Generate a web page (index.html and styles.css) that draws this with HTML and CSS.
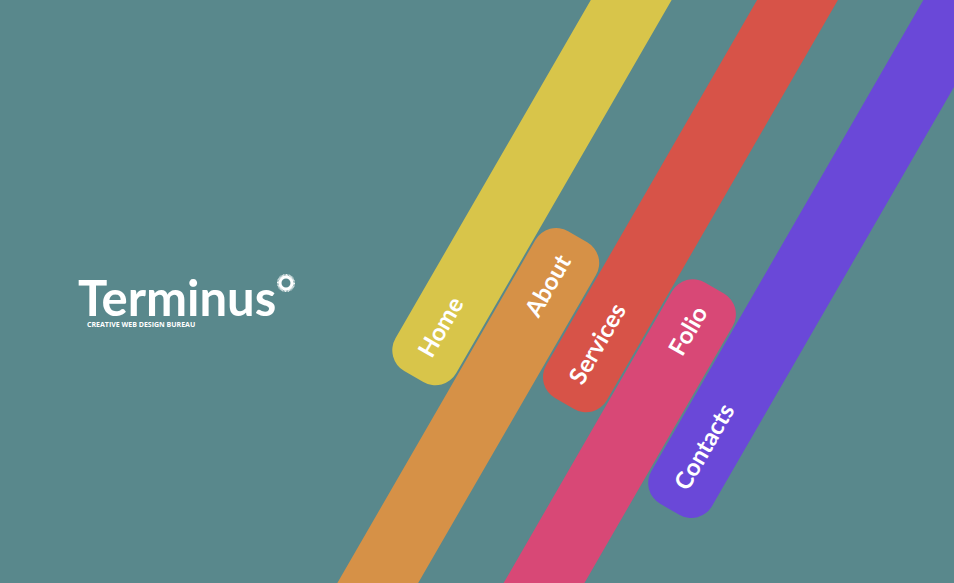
FILE: index.html
```html
<!DOCTYPE html>
<html lang="en">
<head>
  <meta charset="utf-8">
  <title>Terminus</title>
  <link rel="stylesheet" href="styles.css">
</head>
<body>
  <header class="brand">
    <h1 class="brand-name">Terminus
      <svg class="brand-mark" viewBox="0 0 20 20" aria-hidden="true">
        <circle class="mark-teeth" cx="10" cy="10" r="8" pathLength="72"/>
        <circle class="mark-ring" cx="10" cy="10" r="6"/>
      </svg>
    </h1>
    <p class="tagline">CREATIVE WEB DESIGN BUREAU</p>
  </header>
  <nav class="bands">
    <a class="band rising home" href="#home">Home</a>
    <a class="band falling about" href="#about">About</a>
    <a class="band rising services" href="#services">Services</a>
    <a class="band falling folio" href="#folio">Folio</a>
    <a class="band rising contacts" href="#contacts">Contacts</a>
  </nav>
</body>
</html>
```
FILE: styles.css
```css
* {
  box-sizing: border-box;
}

body {
  display: flex;
  flex-direction: column;
  justify-content: center;
  position: relative;
  min-height: 100vh;
  margin: 0;
  padding-left: 78px;
  overflow: hidden;
  background: #59888c;
  color: #fff;
  font-family: "Trebuchet MS", Lato, "Open Sans", sans-serif;
}

.brand {
  align-self: flex-start;
  padding-top: 19px;
}

.brand-name {
  display: flex;
  margin: 0;
  font-size: 49px;
  font-weight: 700;
  line-height: 48px;
}

.brand-mark {
  width: 20px;
  height: 20px;
}

.brand-mark circle {
  fill: none;
  stroke: #fff;
}

.brand-mark .mark-teeth {
  stroke-width: 2;
  stroke-dasharray: 1.2 0.8;
}

.brand-mark .mark-ring {
  stroke-width: 3;
}

.tagline {
  margin: 0 0 0 9px;
  font-family: "Open Sans", sans-serif;
  font-size: 7px;
  font-weight: 700;
  line-height: 8px;
}

/* The strip is turned about the point where its middle meets the first band. */
.bands {
  display: flex;
  flex-direction: column;
  gap: 2px;
  position: absolute;
  top: calc(50% - 36px);
  left: calc(50% - 34px);
  width: 4000px;
  margin-left: -2000px;
  transform: rotate(-60deg);
  transform-origin: 2000px 0;
}

.band {
  padding: 0 24px 4px;
  border-radius: 24px;
  color: #fff;
  font-size: 24px;
  font-weight: 700;
  line-height: 66px;
  text-decoration: none;
}

.falling {
  text-align: right;
}

.home {
  margin-left: 1881px;
  background: #d8c54a;
}

.about {
  margin-right: 1916px;
  background: #d69147;
}

.services {
  margin-left: 1933px;
  background: #d75348;
}

.folio {
  margin-right: 1892px;
  background: #d84876;
}

.contacts {
  margin-left: 1894px;
  background: #6a48d8;
}
```
